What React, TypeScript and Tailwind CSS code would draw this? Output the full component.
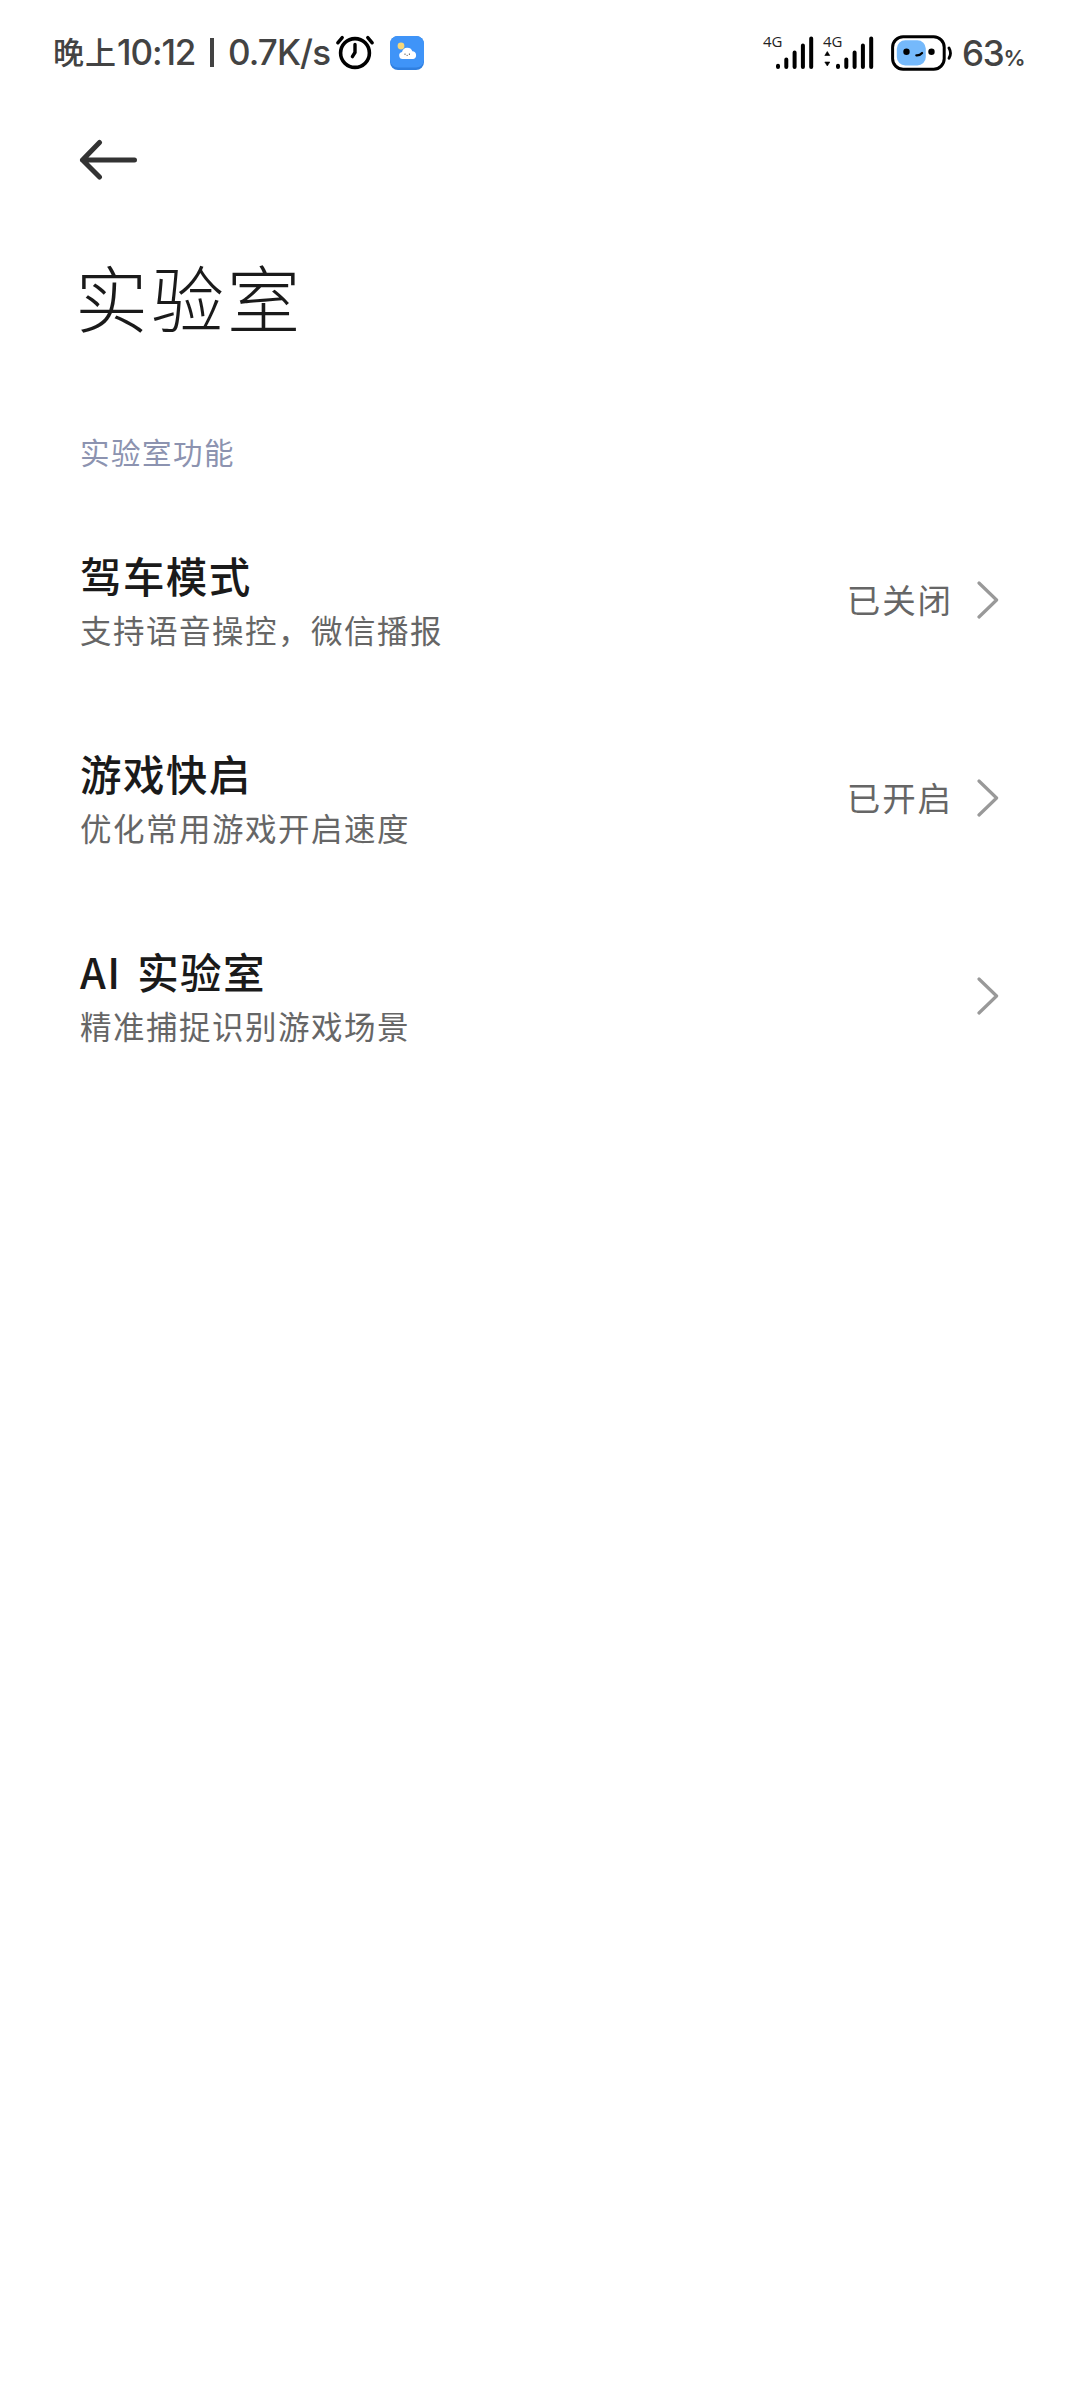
type Setting = {
  title: string;
  description: string;
  value?: string;
};

const settings: Setting[] = [
  { title: "驾车模式", description: "支持语音操控，微信播报", value: "已关闭" },
  { title: "游戏快启", description: "优化常用游戏开启速度", value: "已开启" },
  { title: "AI 实验室", description: "精准捕捉识别游戏场景" }
];

function AlarmIcon() {
  return (
    <svg width="40" height="40" viewBox="0 0 40 40" fill="none" stroke="#000" strokeLinecap="round" className="shrink-0">
      <circle cx="20" cy="20" r="14.4" strokeWidth="3.6" />
      <path d="M20 11.5V19.4L17.4 23.6" strokeWidth="3.4" />
      <path d="M2.8 9.8L7.2 4.6M32.8 4.6L37.2 9.8" strokeWidth="3.4" />
    </svg>
  );
}

function WeatherIcon() {
  return (
    <svg width="34" height="34" viewBox="0 0 34 34" className="shrink-0">
      <rect width="34" height="34" rx="8" fill="#2f7fe0" />
      <rect width="34" height="31.5" rx="8" fill="#3f94f8" />
      <circle cx="11" cy="10" r="3.4" fill="#f6d778" />
      <path d="M12.5 23a3.6 3.6 0 0 1-.5-7.1 5.5 5.5 0 0 1 10.4-.7 4 4 0 0 1 .9 7.8z" fill="#fff" />
      <path d="M15 17.6v1.2M19.4 17.6v1.2" stroke="#444" strokeWidth="1" />
      <path d="M16.4 19.4h1.6" stroke="#777" strokeWidth=".8" />
    </svg>
  );
}

function Signal({ data = false }: { data?: boolean }) {
  return (
    <div className="relative h-10 w-[52px] shrink-0">
      <span className="absolute top-0 left-0 font-['Open_Sans',sans-serif] text-[15px] leading-[16px] font-normal text-[#222]">4G</span>
      <svg width="52" height="40" viewBox="0 0 52 40">
        <path d="M15 33.6v1.2M23.3 27.3v7.5M31.6 20.4v14.4M39.9 13.4v21.4M48.2 6.4v28.4" transform="translate(0 -.9)" stroke="#000" strokeWidth="4" strokeLinecap="round" />
        {data ? <path d="M4.3 18.5L1.8 22.5h5zM4.3 33L1.8 29h5z" stroke="#000" strokeWidth=".6" strokeLinejoin="round" /> : null}
      </svg>
    </div>
  );
}

function BatteryIcon() {
  return (
    <svg width="62" height="36" viewBox="0 0 62 36" fill="none" className="shrink-0">
      <rect x="1.6" y="1.8" width="51.6" height="32.4" rx="10.5" stroke="#000" strokeWidth="3" />
      <rect x="5.8" y="5.3" width="29" height="25.2" rx="8.5" fill="#75b9fb" />
      <circle cx="15.5" cy="16.8" r="3.2" fill="#000" />
      <circle cx="40.5" cy="16.8" r="3.2" fill="#000" />
      <path d="M25.3 20.4q3.5 .3 5.8-2.4" stroke="#000" strokeWidth="2.2" strokeLinecap="round" />
      <path d="M58 13q3 5.2 0 10.2" stroke="#000" strokeWidth="2.8" strokeLinecap="round" />
    </svg>
  );
}

function StatusBar() {
  return (
    <header className="flex h-[104px] items-center pt-px pr-[57px] pl-[53px] font-['Inter','Noto_Sans_CJK_SC',sans-serif] leading-none font-medium text-[#434343]">
      <span className="w-[64px] text-[31px] tracking-[1px] whitespace-nowrap">晚上</span>
      <span className="w-[93px] text-[35px] tracking-[-1.1px] whitespace-nowrap">10:12</span>
      <span className="h-[29px] w-[4px] bg-[#434343]" />
      <span className="ml-[14px] w-[107px] text-[35px] tracking-[-0.9px] whitespace-nowrap">0.7K/s</span>
      <AlarmIcon />
      <div className="ml-[15px]">
        <WeatherIcon />
      </div>
      <div className="ml-auto flex items-center">
        <Signal />
        <div className="mr-[16px] ml-2">
          <Signal data />
        </div>
        <BatteryIcon />
        <span className="ml-[9px] flex w-[61px] items-baseline pt-px whitespace-nowrap">
          <span className="text-[35px] tracking-[-1.2px]">63</span>
          <span className="text-[22px] font-semibold tracking-[-1px]">%</span>
        </span>
      </div>
    </header>
  );
}

function SettingRow({ title, description, value }: Setting) {
  return (
    <button type="button" className="flex h-[198px] w-full items-center pr-[81px] pl-20 text-left">
      <div className="flex-1 pt-[2px]">
        <h2 className="text-[41.5px] leading-[56px] font-medium tracking-[1.4px] text-[#1a1a1a] [word-spacing:5px]">{title}</h2>
        <p className="text-[31.5px] leading-[52px] tracking-[1.5px] text-[#666]">{description}</p>
      </div>
      {value ? <span className="mr-[24px] pb-[3px] text-[33.5px] leading-[50px] tracking-[1.9px] text-[#666]">{value}</span> : null}
      <svg width="22" height="40" viewBox="0 0 22 40" fill="none" stroke="#999" strokeWidth="3.2" strokeLinecap="round" strokeLinejoin="round">
        <path d="M2 3l17.6 17L2 37" />
      </svg>
    </button>
  );
}

export default function App() {
  return (
    <div className="min-h-[2400px] w-[1080px] bg-white font-['Noto_Sans_CJK_SC',sans-serif]">
      <StatusBar />
      <nav className="flex h-[112px] items-center pl-[79px]">
        <button type="button" aria-label="返回">
          <svg width="60" height="42" viewBox="0 0 60 42" fill="none" stroke="#333" strokeWidth="5" strokeLinecap="round" strokeLinejoin="round">
            <path d="M20.5 3.5L3.5 21l17 17M3.5 21h52" />
          </svg>
        </button>
      </nav>
      <h1 className="h-[203px] pt-[31px] pl-[75px] text-[73px] leading-[96px] font-light tracking-[3px] text-[#1a1a1a]">实验室</h1>
      <p className="h-[82px] pl-20 text-[29.5px] leading-[64px] tracking-[1.5px] text-[#8c93b0]">实验室功能</p>
      <main>
        {settings.map((setting) => (
          <SettingRow key={setting.title} {...setting} />
        ))}
      </main>
    </div>
  );
}
